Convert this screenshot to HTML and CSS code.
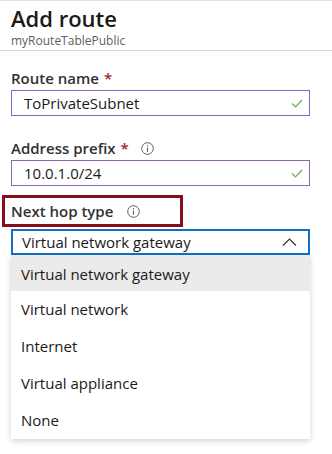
FILE: index.html
```html
<!DOCTYPE html>
<html lang="en">
<head>
    <meta charset="UTF-8">
    <meta name="viewport" content="width=device-width, initial-scale=1.0">
    <title>Add route</title>
    <link rel="stylesheet" href="styles.css">
</head>
<body>
    <div class="panel">
        <div class="header">
            <h2>Add route</h2>
            <div class="subtitle">myRouteTablePublic</div>
        </div>

        <div class="field">
            <label class="field-label">Route name <span class="req">*</span></label>
            <div class="input valid">
                <span>ToPrivateSubnet</span>
                <svg class="check" width="12" height="9" viewBox="0 0 12 9"><path d="M1 4.5 L4.5 8 L11 1" fill="none" stroke="#6bb04a" stroke-width="1.2"/></svg>
            </div>
        </div>

        <div class="field">
            <label class="field-label">Address prefix <span class="req">*</span>
                <svg class="info" width="13" height="13" viewBox="0 0 13 13"><circle cx="6.5" cy="6.5" r="5.8" fill="none" stroke="#605e5c" stroke-width="1"/><path d="M6.5 5.5 V9.8" stroke="#605e5c" stroke-width="1.1"/><circle cx="6.5" cy="3.7" r="0.7" fill="#605e5c"/></svg>
            </label>
            <div class="input valid">
                <span>10.0.1.0/24</span>
                <svg class="check" width="12" height="9" viewBox="0 0 12 9"><path d="M1 4.5 L4.5 8 L11 1" fill="none" stroke="#6bb04a" stroke-width="1.2"/></svg>
            </div>
        </div>

        <div class="field">
            <div class="highlight">
                <label class="field-label">Next hop type
                    <svg class="info" width="13" height="13" viewBox="0 0 13 13"><circle cx="6.5" cy="6.5" r="5.8" fill="none" stroke="#605e5c" stroke-width="1"/><path d="M6.5 5.5 V9.8" stroke="#605e5c" stroke-width="1.1"/><circle cx="6.5" cy="3.7" r="0.7" fill="#605e5c"/></svg>
                </label>
            </div>
            <div class="select open">
                <span>Virtual network gateway</span>
                <svg class="chevron" width="15" height="8" viewBox="0 0 15 8"><path d="M1 7.5 L7.5 1 L14 7.5" fill="none" stroke="#323130" stroke-width="1.2"/></svg>
            </div>
            <ul class="options">
                <li class="selected">Virtual network gateway</li>
                <li>Virtual network</li>
                <li>Internet</li>
                <li>Virtual appliance</li>
                <li>None</li>
            </ul>
        </div>
    </div>
</body>
</html>
```

FILE: styles.css
```css
body {
    font-family: "Open Sans", "Noto Sans", sans-serif;
    margin: 0;
    padding: 0;
    background-color: #fff;
    color: #323130;
}
.panel {
    width: 332px;
    height: 454px;
    overflow: hidden;
    box-sizing: border-box;
    border-top: 1px solid #e1e1e1;
}
.header {
    padding: 2px 11px 0;
    border-bottom: 1px solid #d6d6d6;
    height: 50px;
    box-sizing: border-box;
}
.header h2 {
    margin: 0;
    font-size: 22px;
    font-weight: 600;
    line-height: 30px;
    color: #1b1a19;
}
.subtitle {
    font-size: 12px;
    color: #605e5c;
    line-height: 16px;
}
.field {
    padding: 0 22px 0 11px;
}
.field-label {
    display: flex;
    align-items: center;
    font-size: 15px;
    font-weight: 600;
    color: #323130;
    height: 20px;
}
.req {
    color: #a4262c;
    margin-left: 5px;
}
.info {
    margin-left: 14px;
}
.field:nth-child(2) {
    margin-top: 17px;
}
.field:nth-child(3) {
    margin-top: 22px;
}
.field:nth-child(3) .info {
    margin-left: 12px;
}
.field:nth-child(2) .field-label,
.field:nth-child(3) .field-label {
    margin-bottom: 2px;
}
.input {
    display: flex;
    align-items: center;
    justify-content: space-between;
    height: 26px;
    box-sizing: border-box;
    border: 1px solid #8d62b9;
    padding: 0 6px 0 12px;
    font-size: 15px;
    color: #1b1a19;
}
.field:nth-child(4) {
    margin-top: 9px;
}
.highlight {
    margin-left: -9px;
    width: 181px;
    height: 32px;
    box-sizing: border-box;
    border: 3px solid #870c1d;
    padding: 3px 0 0 6px;
}
.select {
    display: flex;
    align-items: center;
    justify-content: space-between;
    height: 26px;
    margin-top: 2px;
    box-sizing: border-box;
    border: 2px solid #0f6fc6;
    padding: 0 11px 0 9px;
    font-size: 15px;
    color: #1b1a19;
}
.options {
    list-style: none;
    margin: 0;
    padding: 0;
    background-color: #fff;
    box-shadow: 0 2px 6px rgba(0, 0, 0, 0.18);
}
.options li {
    height: 37px;
    line-height: 37px;
    padding-left: 10px;
    font-size: 15px;
    color: #1b1a19;
}
.options li.selected {
    height: 36px;
    line-height: 38px;
    background-color: #ebebeb;
}
```
